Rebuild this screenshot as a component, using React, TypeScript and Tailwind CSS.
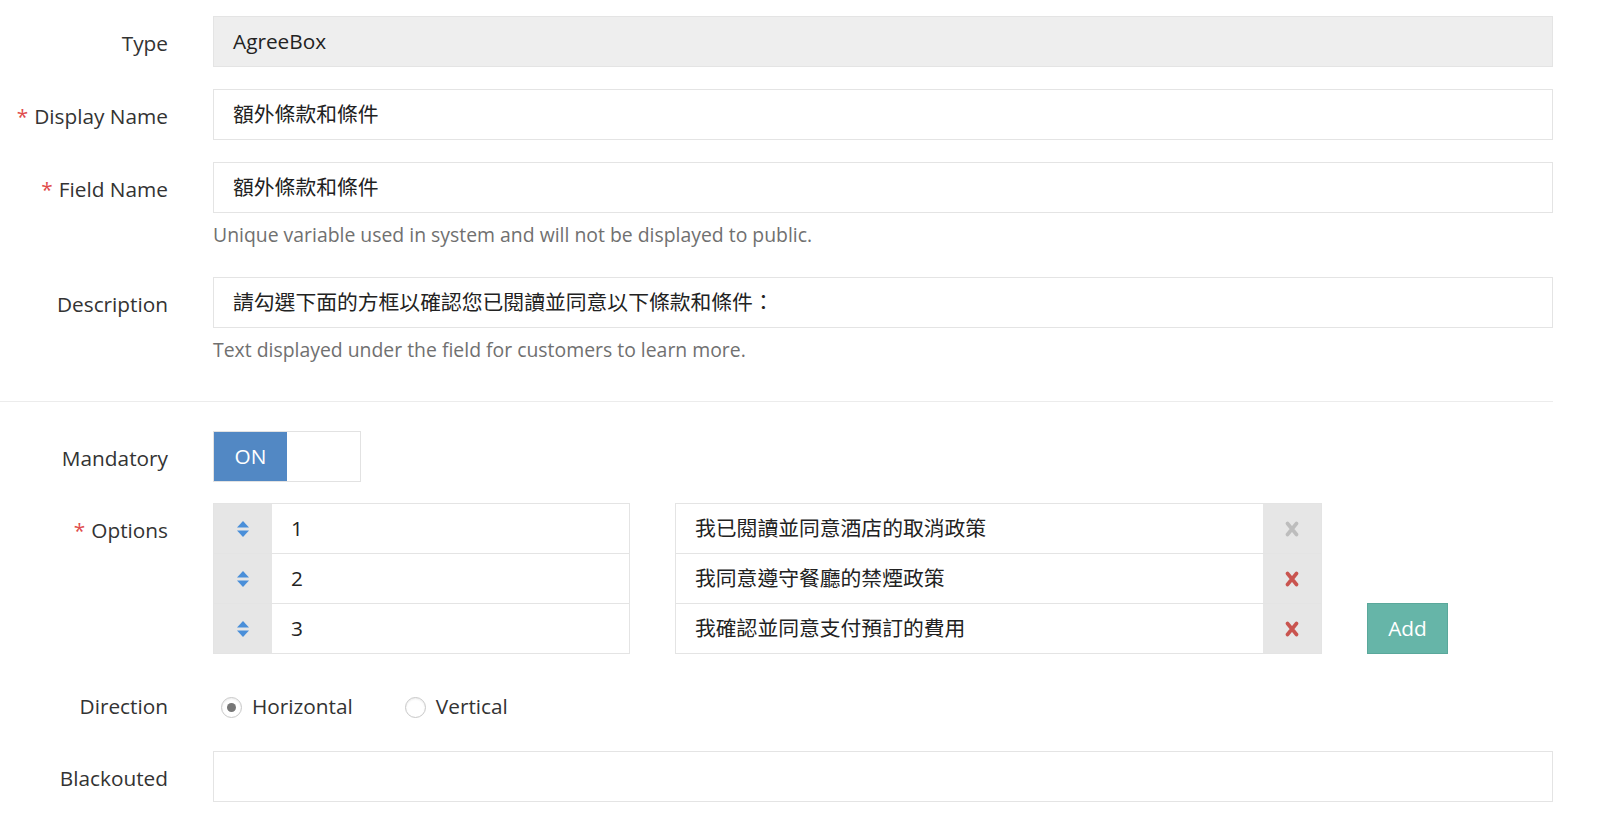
import React from "react";

const font = {
  fontFamily:
    '"Open Sans", "Noto Sans CJK TC", "Noto Sans", sans-serif',
};

function Label({ text, required }: { text: string; required?: boolean }) {
  return (
    <div className="w-[168px] shrink-0 h-[51px] flex items-center justify-end pt-[5px] text-[20.8px] text-[#333]">
      {required && <span className="text-[#e04b4b] mr-[6px]">*</span>}
      {text}
    </div>
  );
}

function TextBox({ value, grey }: { value?: string; grey?: boolean }) {
  return (
    <div
      className={`h-[51px] w-full border border-[#e4e4e4] flex items-center px-[19px] text-[20.8px] text-[#222] ${
        grey ? "bg-[#eeeeee]" : "bg-white"
      }`}
    >
      {value}
    </div>
  );
}

function SortIcon() {
  return (
    <svg width="14" height="18" viewBox="0 0 14 18">
      <path d="M7 1 L13 7.5 H1 Z" fill="#4a8fd9" />
      <path d="M7 17 L13 10.5 H1 Z" fill="#4a8fd9" />
    </svg>
  );
}

function XIcon({ color }: { color: string }) {
  return (
    <svg width="14" height="16" viewBox="0 0 14 16">
      <path
        d="M2.5 2.5 L11.5 13.5 M11.5 2.5 L2.5 13.5"
        stroke={color}
        strokeWidth="3.6"
        strokeLinecap="round"
      />
    </svg>
  );
}

function Radio({ checked, label }: { checked?: boolean; label: string }) {
  return (
    <div className="flex items-center gap-[10px]">
      <div className="w-[21px] h-[21px] rounded-full border border-[#c8c8c8] flex items-center justify-center bg-white shadow-[inset_0_1px_2px_rgba(0,0,0,0.08)]">
        {checked && <div className="w-[9px] h-[9px] rounded-full bg-[#777]" />}
      </div>
      <span className="text-[20.8px] text-[#333]">{label}</span>
    </div>
  );
}

const options = [
  { sort: "1", text: "我已閱讀並同意酒店的取消政策", muted: true },
  { sort: "2", text: "我同意遵守餐廳的禁煙政策", muted: false },
  { sort: "3", text: "我確認並同意支付預訂的費用", muted: false },
];

export default function App() {
  return (
    <div className="w-[1600px] h-[838px] bg-white overflow-hidden" style={font}>
      <div className="pr-[47px]">
        <div className="flex mt-[16px]">
          <Label text="Type" />
          <div className="ml-[45px] flex-1">
            <TextBox value="AgreeBox" grey />
          </div>
        </div>

        <div className="flex mt-[22px]">
          <Label text="Display Name" required />
          <div className="ml-[45px] flex-1">
            <TextBox value="額外條款和條件" />
          </div>
        </div>

        <div className="flex mt-[22px]">
          <Label text="Field Name" required />
          <div className="ml-[45px] flex-1">
            <TextBox value="額外條款和條件" />
            <p className="mt-[9px] text-[19.4px] leading-[26px] text-[#707070]">
              Unique variable used in system and will not be displayed to public.
            </p>
          </div>
        </div>

        <div className="flex mt-[29px]">
          <Label text="Description" />
          <div className="ml-[45px] flex-1">
            <TextBox value="請勾選下面的方框以確認您已閱讀並同意以下條款和條件：" />
            <p className="mt-[9px] text-[19.4px] leading-[26px] text-[#707070]">
              Text displayed under the field for customers to learn more.
            </p>
          </div>
        </div>

        <div className="mt-[38px] h-px bg-[#ececec]" />

        <div className="flex mt-[29px]">
          <Label text="Mandatory" />
          <div className="ml-[45px] flex-1">
            <div className="w-[148px] h-[51px] border border-[#e2e2e2] flex">
              <div className="w-[73px] bg-[#5288c4] text-white text-[20.8px] flex items-center justify-center">
                ON
              </div>
              <div className="flex-1 bg-white" />
            </div>
          </div>
        </div>

        <div className="flex mt-[21px]">
          <Label text="Options" required />
          <div className="ml-[45px] flex-1 flex items-end">
            <div className="w-[417px] flex flex-col">
              {options.map((o, i) => (
                <div
                  key={o.sort}
                  className={`flex h-[51px] border border-[#e4e4e4] ${i > 0 ? "-mt-px" : ""}`}
                >
                  <div className="w-[58px] bg-[#e6e6e6] flex items-center justify-center">
                    <SortIcon />
                  </div>
                  <div className="flex-1 flex items-center pl-[19px] text-[20.8px] text-[#222]">
                    {o.sort}
                  </div>
                </div>
              ))}
            </div>
            <div className="ml-[45px] w-[647px] flex flex-col">
              {options.map((o, i) => (
                <div
                  key={o.text}
                  className={`flex h-[51px] border border-[#e4e4e4] ${i > 0 ? "-mt-px" : ""}`}
                >
                  <div className="flex-1 flex items-center pl-[19px] text-[20.8px] text-[#222]">
                    {o.text}
                  </div>
                  <div className="w-[58px] bg-[#e6e6e6] flex items-center justify-center">
                    <XIcon color={o.muted ? "#bdbdbd" : "#c9544f"} />
                  </div>
                </div>
              ))}
            </div>
            <button className="ml-[45px] w-[81px] h-[51px] bg-[#66b5a8] border border-[#5aa89b] text-white text-[20.8px] flex items-center justify-center">
              Add
            </button>
          </div>
        </div>

        <div className="flex mt-[25px]">
          <Label text="Direction" />
          <div className="ml-[53px] flex-1 flex items-center gap-[52px] pt-[5px]">
            <Radio checked label="Horizontal" />
            <Radio label="Vertical" />
          </div>
        </div>

        <div className="flex mt-[21px]">
          <Label text="Blackouted" />
          <div className="ml-[45px] flex-1">
            <TextBox />
          </div>
        </div>
      </div>
    </div>
  );
}
